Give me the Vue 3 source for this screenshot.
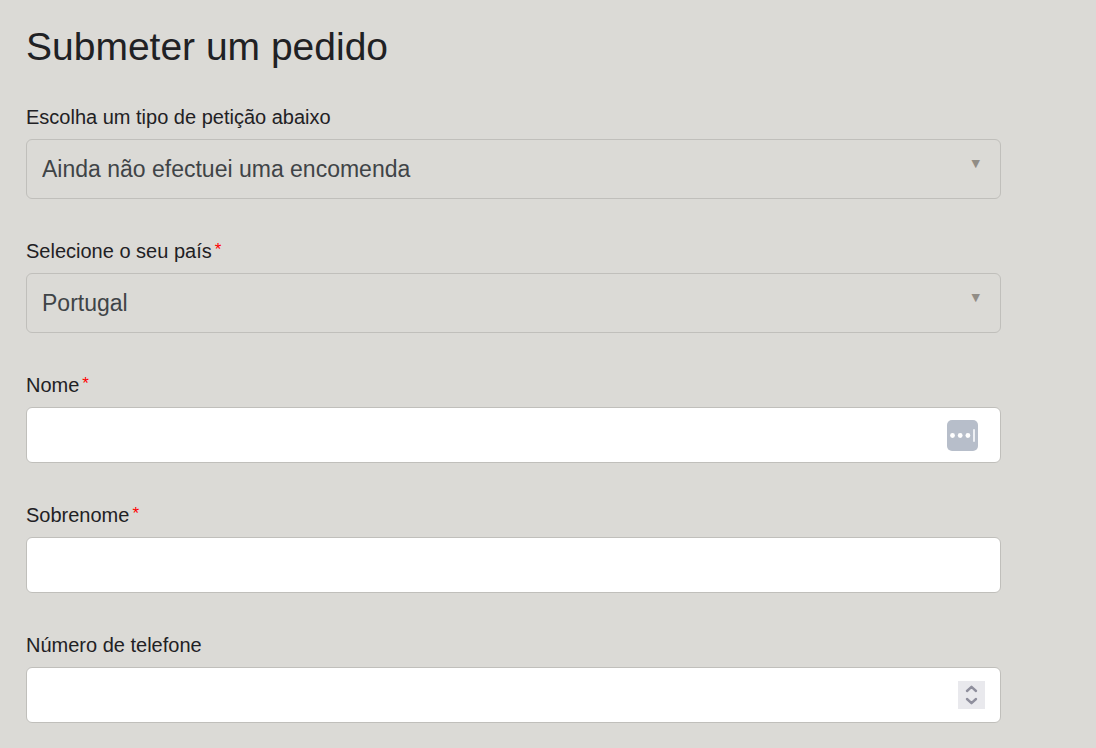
<template>
  <main class="request">
    <h1 class="request__title">Submeter um pedido</h1>
    <form class="request__form" @submit.prevent>
      <div v-for="field in fields" :key="field.id" class="field">
        <label class="field__label" :for="field.id">
          {{ field.label }}<span v-if="field.required" class="field__required">*</span>
        </label>
        <div class="field__control">
          <template v-if="field.options">
            <select :id="field.id" v-model="form[field.id]" class="field__select">
              <option v-for="opt in field.options" :key="opt" :value="opt">{{ opt }}</option>
            </select>
            <span class="field__arrow" aria-hidden="true">▼</span>
          </template>
          <input v-else :id="field.id" v-model="form[field.id]" class="field__input" :type="field.type" :required="field.required">

          <button v-if="field.autofill" type="button" class="field__autofill" aria-label="Preencher">
            <svg viewBox="0 0 31 31" width="31" height="31">
              <circle cx="5.5" cy="15.5" r="2.4" fill="#fff" />
              <circle cx="13.2" cy="15.5" r="2.4" fill="#fff" />
              <circle cx="20.9" cy="15.5" r="2.4" fill="#fff" />
              <rect x="26" y="9" width="2" height="13" rx="1" fill="#eef0f4" />
            </svg>
          </button>

          <div v-if="field.type === 'number'" class="field__spin">
            <button type="button" class="field__step" aria-label="Aumentar" @click="step(field.id, 1)">
              <svg viewBox="0 0 27 14" width="27" height="14"><path d="M9 10l4.5-4.2L18 10" /></svg>
            </button>
            <button type="button" class="field__step" aria-label="Diminuir" @click="step(field.id, -1)">
              <svg viewBox="0 0 27 14" width="27" height="14"><path d="M9 4l4.5 4.2L18 4" /></svg>
            </button>
          </div>
        </div>
      </div>
    </form>
  </main>
</template>

<script setup>
import { reactive } from 'vue'

const fields = [
  { id: 'type', label: 'Escolha um tipo de petição abaixo', options: ['Ainda não efectuei uma encomenda'] },
  { id: 'country', label: 'Selecione o seu país', required: true, options: ['Portugal'] },
  { id: 'name', label: 'Nome', required: true, type: 'text', autofill: true },
  { id: 'surname', label: 'Sobrenome', required: true, type: 'text' },
  { id: 'phone', label: 'Número de telefone', type: 'number' }
]

const form = reactive({
  type: 'Ainda não efectuei uma encomenda',
  country: 'Portugal',
  name: '',
  surname: '',
  phone: ''
})

function step(id, by) {
  form[id] = Number(form[id] || 0) + by
}
</script>

<style>
body { margin: 0; background: #dbdad6; }
</style>

<style scoped>
.request { padding: 24px 95px 24px 26px; font-family: 'Liberation Sans', Arial, sans-serif; color: #1f2124; }
.request__title { margin: 0 0 35px; font-size: 39px; line-height: 46px; font-weight: 400; }
.request__form { display: flex; flex-direction: column; gap: 40px; }

.field { display: flex; flex-direction: column; gap: 10px; }
.field__label { font-size: 20px; line-height: 24px; }
.field__required { margin-left: 3px; font-size: 17px; line-height: 17px; vertical-align: 3px; color: #f00; }
.field__control { position: relative; display: flex; }
.field__select,
.field__input {
  box-sizing: border-box;
  width: 100%;
  margin: 0;
  padding: 0 15px;
  border: 1px solid #c0bfbb;
  border-radius: 6px;
  font-family: inherit;
  font-size: 23px;
  color: #3f4447;
}
.field__select { height: 60px; background: transparent; appearance: none; }
.field__input { height: 56px; background: #fff; appearance: textfield; }
.field__input::-webkit-inner-spin-button { appearance: none; margin: 0; }
.field__arrow { position: absolute; top: 18px; right: 21px; font-family: 'DejaVu Sans', sans-serif; font-size: 11px; line-height: 14px; color: #918d86; pointer-events: none; }

.field__autofill { position: absolute; top: 13px; right: 23px; padding: 0; border: 0; border-radius: 5px; background: #b7beca; }
.field__autofill svg { display: block; }

.field__spin { position: absolute; top: 14px; right: 16px; display: flex; flex-direction: column; background: #e9e9ed; }
.field__step { padding: 0; border: 0; background: none; }
.field__step svg { display: block; fill: none; stroke: #8f8f9d; stroke-width: 2.4; stroke-linecap: round; stroke-linejoin: round; }
</style>
